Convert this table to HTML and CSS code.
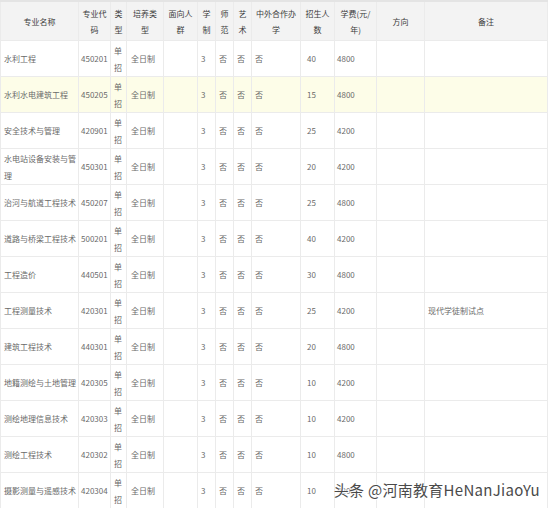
FILE: index.html
```html
<!DOCTYPE html>
<html lang="zh">
<head>
<meta charset="utf-8">
<title>专业表</title>
<link rel="stylesheet" href="styles.css">
</head>
<body>
<div class="page">
<table class="plan">
<colgroup>
<col class="c-name"><col class="c-code"><col class="c-type"><col class="c-mode"><col class="c-aud"><col class="c-yrs"><col class="c-norm"><col class="c-art"><col class="c-coop"><col class="c-num"><col class="c-fee"><col class="c-dir"><col class="c-note">
</colgroup>
<thead>
<tr><th>专业名称</th><th>专业代码</th><th>类型</th><th>培养类型</th><th>面向人群</th><th>学制</th><th>师范</th><th>艺术</th><th>中外合作办学</th><th>招生人数</th><th>学费(元/年)</th><th>方向</th><th>备注</th></tr>
</thead>
<tbody>
<tr><td>水利工程</td><td>450201</td><td>单招</td><td>全日制</td><td></td><td>3</td><td>否</td><td>否</td><td>否</td><td>40</td><td>4800</td><td></td><td></td></tr>
<tr class="hl"><td>水利水电建筑工程</td><td>450205</td><td>单招</td><td>全日制</td><td></td><td>3</td><td>否</td><td>否</td><td>否</td><td>15</td><td>4800</td><td></td><td></td></tr>
<tr><td>安全技术与管理</td><td>420901</td><td>单招</td><td>全日制</td><td></td><td>3</td><td>否</td><td>否</td><td>否</td><td>25</td><td>4200</td><td></td><td></td></tr>
<tr><td>水电站设备安装与管理</td><td>450301</td><td>单招</td><td>全日制</td><td></td><td>3</td><td>否</td><td>否</td><td>否</td><td>20</td><td>4200</td><td></td><td></td></tr>
<tr><td>治河与航道工程技术</td><td>450207</td><td>单招</td><td>全日制</td><td></td><td>3</td><td>否</td><td>否</td><td>否</td><td>25</td><td>4800</td><td></td><td></td></tr>
<tr><td>道路与桥梁工程技术</td><td>500201</td><td>单招</td><td>全日制</td><td></td><td>3</td><td>否</td><td>否</td><td>否</td><td>40</td><td>4200</td><td></td><td></td></tr>
<tr><td>工程造价</td><td>440501</td><td>单招</td><td>全日制</td><td></td><td>3</td><td>否</td><td>否</td><td>否</td><td>30</td><td>4800</td><td></td><td></td></tr>
<tr><td>工程测量技术</td><td>420301</td><td>单招</td><td>全日制</td><td></td><td>3</td><td>否</td><td>否</td><td>否</td><td>25</td><td>4200</td><td></td><td>现代学徒制试点</td></tr>
<tr><td>建筑工程技术</td><td>440301</td><td>单招</td><td>全日制</td><td></td><td>3</td><td>否</td><td>否</td><td>否</td><td>20</td><td>4800</td><td></td><td></td></tr>
<tr><td>地籍测绘与土地管理</td><td>420305</td><td>单招</td><td>全日制</td><td></td><td>3</td><td>否</td><td>否</td><td>否</td><td>10</td><td>4200</td><td></td><td></td></tr>
<tr><td>测绘地理信息技术</td><td>420303</td><td>单招</td><td>全日制</td><td></td><td>3</td><td>否</td><td>否</td><td>否</td><td>10</td><td>4200</td><td></td><td></td></tr>
<tr><td>测绘工程技术</td><td>420302</td><td>单招</td><td>全日制</td><td></td><td>3</td><td>否</td><td>否</td><td>否</td><td>10</td><td>4800</td><td></td><td></td></tr>
<tr><td>摄影测量与遥感技术</td><td>420304</td><td>单招</td><td>全日制</td><td></td><td>3</td><td>否</td><td>否</td><td>否</td><td>10</td><td>4200</td><td></td><td></td></tr>
</tbody>
</table>
<div class="mark">头条 @河南教育HeNanJiaoYu</div>
</div>
</body>
</html>
```

FILE: styles.css
```css
html, body {
  margin: 0;
  padding: 0;
  background: #ffffff;
}
.page {
  position: relative;
  width: 549px;
  height: 508px;
  overflow: hidden;
}
.plan {
  border-collapse: collapse;
  table-layout: fixed;
  width: 547px;
  font-family: "Noto Sans CJK SC", "Noto Sans", sans-serif;
  font-size: 8px;
  color: #6a6a6a;
}
.c-name { width: 78px; }
.c-code { width: 32px; }
.c-type { width: 16px; }
.c-mode { width: 37px; }
.c-aud { width: 34px; }
.c-yrs { width: 18px; }
.c-norm { width: 18px; }
.c-art { width: 18px; }
.c-coop { width: 49px; }
.c-num { width: 34px; }
.c-fee { width: 42px; }
.c-dir { width: 48px; }
.c-note { width: 123px; }
.plan th, .plan td {
  border: 1px solid #ebebeb;
  vertical-align: middle;
  word-break: break-all;
  overflow: hidden;
}
.plan th {
  background: #f3f3f3;
  color: #3c3c3c;
  font-weight: normal;
  height: 36px;
  line-height: 16px;
  padding: 2px 3px 0;
  text-align: center;
}
.plan thead tr {
  border-top: 2px solid #e4e4e4;
}
.plan td {
  height: 36px;
  box-sizing: border-box;
  line-height: 17px;
  padding: 0 0 0 3px;
  text-align: left;
}
.plan td:nth-child(2) { padding-left: 2px; }
.plan td:nth-child(4) { padding-left: 4px; }
.plan td:nth-child(10) { padding-left: 6px; }
.plan td:nth-child(11) { padding-left: 2px; }
.plan tr.hl td { background: #fdfde8; }
.mark {
  position: absolute;
  right: 9px;
  bottom: 9px;
  font-family: "Noto Sans CJK SC", "Noto Sans", sans-serif;
  font-size: 15px;
  line-height: 18px;
  letter-spacing: 0.3px;
  color: #4a4a4a;
  text-shadow: 0 0 2px #ffffff, 0 0 2px #ffffff, 1px 1px 1px #ffffff;
}
```
